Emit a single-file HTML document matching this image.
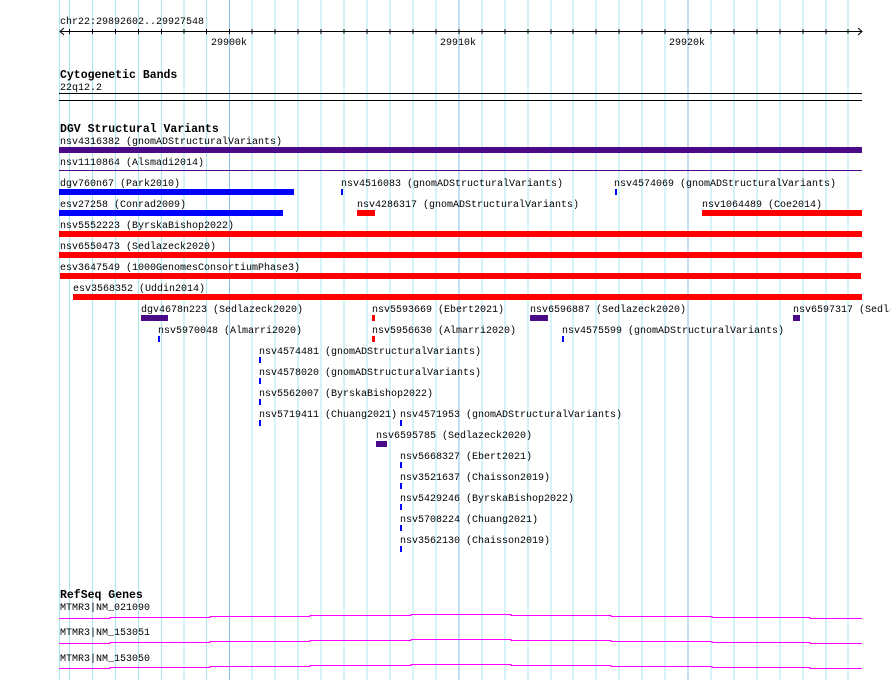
<!DOCTYPE html>
<html><head><meta charset="utf-8"><style>
html,body{margin:0;padding:0;background:#fff;width:890px;height:680px;overflow:hidden}
svg text{font-family:"Liberation Mono",monospace;font-size:10px;fill:#000}
svg text.b{font-weight:bold;font-size:11.5px}
</style></head><body>
<svg width="890" height="680" xmlns="http://www.w3.org/2000/svg">
<g id="grid" stroke="#a8e8f0" stroke-width="1">
<line x1="59.5" y1="0" x2="59.5" y2="680"/><line x1="69.5" y1="0" x2="69.5" y2="680"/><line x1="92.5" y1="0" x2="92.5" y2="680"/><line x1="115.5" y1="0" x2="115.5" y2="680"/><line x1="138.5" y1="0" x2="138.5" y2="680"/><line x1="161.5" y1="0" x2="161.5" y2="680"/><line x1="184" y1="0" x2="184" y2="680"/><line x1="206.5" y1="0" x2="206.5" y2="680"/>
<line x1="252" y1="0" x2="252" y2="680"/><line x1="275" y1="0" x2="275" y2="680"/><line x1="298" y1="0" x2="298" y2="680"/><line x1="321" y1="0" x2="321" y2="680"/><line x1="344" y1="0" x2="344" y2="680"/><line x1="367" y1="0" x2="367" y2="680"/><line x1="390" y1="0" x2="390" y2="680"/><line x1="413" y1="0" x2="413" y2="680"/><line x1="436" y1="0" x2="436" y2="680"/>
<line x1="482" y1="0" x2="482" y2="680"/><line x1="505" y1="0" x2="505" y2="680"/><line x1="528" y1="0" x2="528" y2="680"/><line x1="551" y1="0" x2="551" y2="680"/><line x1="573" y1="0" x2="573" y2="680"/><line x1="596" y1="0" x2="596" y2="680"/><line x1="619" y1="0" x2="619" y2="680"/><line x1="642" y1="0" x2="642" y2="680"/><line x1="665" y1="0" x2="665" y2="680"/>
<line x1="711" y1="0" x2="711" y2="680"/><line x1="734" y1="0" x2="734" y2="680"/><line x1="757" y1="0" x2="757" y2="680"/><line x1="780" y1="0" x2="780" y2="680"/><line x1="803" y1="0" x2="803" y2="680"/><line x1="826" y1="0" x2="826" y2="680"/><line x1="848" y1="0" x2="848" y2="680"/>
</g>
<g stroke="#88bfe6"><line x1="229.5" y1="0" x2="229.5" y2="680"/><line x1="459" y1="0" x2="459" y2="680"/><line x1="688" y1="0" x2="688" y2="680"/></g>

<text x="60" y="24">chr22:29892602..29927548</text>
<g stroke="#000" stroke-width="1">
<line x1="60" y1="31.5" x2="862" y2="31.5"/>
<polyline points="64,28 60,31.5 64,35" fill="none"/>
<polyline points="858,28 862,31.5 858,35" fill="none"/>
<path d="M69.5 29v5M92.5 29v5M115.5 29v5M138.5 29v5M161.5 29v5M184 29v5M206.5 29v5M229.5 29v5M252 29v5M275 29v5M298 29v5M321 29v5M344 29v5M367 29v5M390 29v5M413 29v5M436 29v5M459 29v5M482 29v5M505 29v5M528 29v5M551 29v5M573 29v5M596 29v5M619 29v5M642 29v5M665 29v5M688 29v5M711 29v5M734 29v5M757 29v5M780 29v5M803 29v5M826 29v5M848 29v5"/>
</g>
<text x="211" y="45">29900k</text><text x="440" y="45">29910k</text><text x="669" y="45">29920k</text>

<text class="b" x="60" y="78">Cytogenetic Bands</text>
<text x="60" y="90">22q12.2</text>
<rect x="59" y="93" width="803" height="1" fill="#000"/>
<rect x="59" y="100" width="803" height="1" fill="#000"/>

<text class="b" x="60" y="132">DGV Structural Variants</text>
<text x="60" y="144">nsv4316382 (gnomADStructuralVariants)</text>
<rect x="59" y="147" width="803" height="6" fill="#4b0a87"/>
<text x="60" y="165">nsv1110864 (Alsmadi2014)</text>
<rect x="59" y="170" width="803" height="1" fill="#4b0a87"/>

<text x="60" y="186">dgv760n67 (Park2010)</text>
<rect x="59" y="189" width="235" height="6" fill="#0000ff"/>
<text x="341" y="186">nsv4516083 (gnomADStructuralVariants)</text>
<rect x="341" y="189" width="2" height="6" fill="#0000ff"/>
<text x="614" y="186">nsv4574069 (gnomADStructuralVariants)</text>
<rect x="615" y="189" width="2" height="6" fill="#0000ff"/>

<text x="60" y="207">esv27258 (Conrad2009)</text>
<rect x="59" y="210" width="224" height="6" fill="#0000ff"/>
<text x="357" y="207">nsv4286317 (gnomADStructuralVariants)</text>
<rect x="357" y="210" width="18" height="6" fill="#ff0000"/>
<text x="702" y="207">nsv1064489 (Coe2014)</text>
<rect x="702" y="210" width="160" height="6" fill="#ff0000"/>

<text x="60" y="228">nsv5552223 (ByrskaBishop2022)</text>
<rect x="59" y="231" width="803" height="6" fill="#ff0000"/>
<text x="60" y="249">nsv6550473 (Sedlazeck2020)</text>
<rect x="59" y="252" width="803" height="6" fill="#ff0000"/>
<text x="60" y="270">esv3647549 (1000GenomesConsortiumPhase3)</text>
<rect x="60" y="273" width="801" height="6" fill="#ff0000"/>
<text x="73" y="291">esv3568352 (Uddin2014)</text>
<rect x="73" y="294" width="789" height="6" fill="#ff0000"/>

<text x="141" y="312">dgv4678n223 (Sedlazeck2020)</text>
<rect x="141" y="315" width="27" height="6" fill="#4b0a87"/>
<text x="372" y="312">nsv5593669 (Ebert2021)</text>
<rect x="372" y="315" width="3" height="6" fill="#ff0000"/>
<text x="530" y="312">nsv6596887 (Sedlazeck2020)</text>
<rect x="530" y="315" width="18" height="6" fill="#4b0a87"/>
<text x="793" y="312">nsv6597317 (Sedlazeck2020)</text>
<rect x="793" y="315" width="7" height="6" fill="#4b0a87"/>

<text x="158" y="333">nsv5970048 (Almarri2020)</text>
<rect x="158" y="336" width="2" height="6" fill="#0000ff"/>
<text x="372" y="333">nsv5956630 (Almarri2020)</text>
<rect x="372" y="336" width="3" height="6" fill="#ff0000"/>
<text x="562" y="333">nsv4575599 (gnomADStructuralVariants)</text>
<rect x="562" y="336" width="2" height="6" fill="#0000ff"/>

<text x="259" y="354">nsv4574481 (gnomADStructuralVariants)</text>
<rect x="259" y="357" width="2" height="6" fill="#0000ff"/>
<text x="259" y="375">nsv4578020 (gnomADStructuralVariants)</text>
<rect x="259" y="378" width="2" height="6" fill="#0000ff"/>
<text x="259" y="396">nsv5562007 (ByrskaBishop2022)</text>
<rect x="259" y="399" width="2" height="6" fill="#0000ff"/>
<text x="259" y="417">nsv5719411 (Chuang2021)</text>
<rect x="259" y="420" width="2" height="6" fill="#0000ff"/>
<text x="400" y="417">nsv4571953 (gnomADStructuralVariants)</text>
<rect x="400" y="420" width="2" height="6" fill="#0000ff"/>
<text x="376" y="438">nsv6595785 (Sedlazeck2020)</text>
<rect x="376" y="441" width="11" height="6" fill="#4b0a87"/>
<text x="400" y="459">nsv5668327 (Ebert2021)</text>
<rect x="400" y="462" width="2" height="6" fill="#0000ff"/>
<text x="400" y="480">nsv3521637 (Chaisson2019)</text>
<rect x="400" y="483" width="2" height="6" fill="#0000ff"/>
<text x="400" y="501">nsv5429246 (ByrskaBishop2022)</text>
<rect x="400" y="504" width="2" height="6" fill="#0000ff"/>
<text x="400" y="522">nsv5708224 (Chuang2021)</text>
<rect x="400" y="525" width="2" height="6" fill="#0000ff"/>
<text x="400" y="543">nsv3562130 (Chaisson2019)</text>
<rect x="400" y="546" width="2" height="6" fill="#0000ff"/>

<text class="b" x="60" y="598">RefSeq Genes</text>
<text x="60" y="610">MTMR3|NM_021090</text>
<text x="60" y="635">MTMR3|NM_153051</text>
<text x="60" y="661">MTMR3|NM_153050</text>
<g fill="none" stroke="#ff00ff" stroke-width="1">
<path d="M59 618.5H110V617.5H210V616.5H310V615.5H411V614.5H511V615.5H611V616.5H712V617.5H810V618.5H862"/>
<path d="M59 643.5H110V642.5H210V641.5H310V640.5H411V639.5H511V640.5H611V641.5H712V642.5H810V643.5H862"/>
<path d="M59 668.5H110V667.5H210V666.5H310V665.5H411V664.5H511V665.5H611V666.5H712V667.5H810V668.5H862"/>
</g>
</svg>
</body></html>
